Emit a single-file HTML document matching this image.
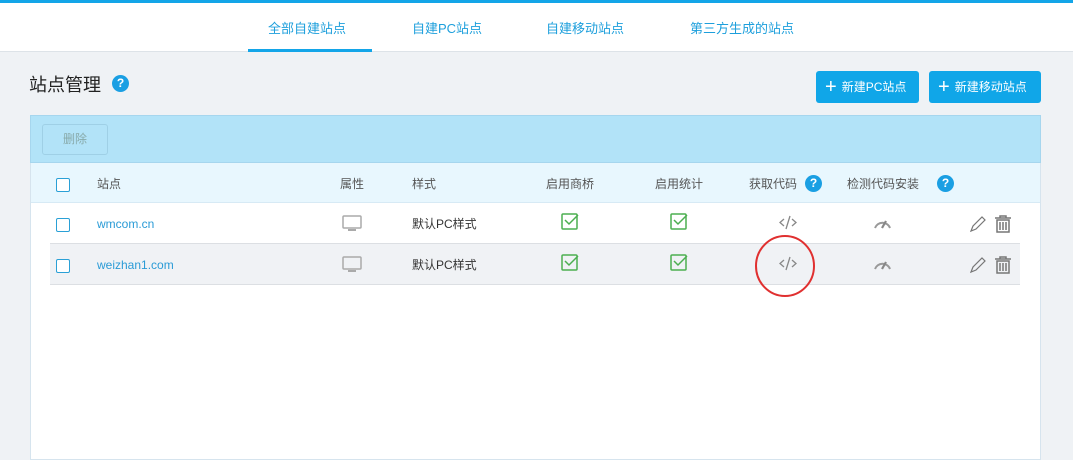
<!DOCTYPE html>
<html><head><meta charset="utf-8"><style>
*{margin:0;padding:0;box-sizing:border-box}
body{width:1073px;height:455px;overflow:hidden;background:#eff2f5;font-family:"Liberation Sans","Noto Sans CJK SC",sans-serif;position:relative;font-size:12px;color:#333}
.abs{position:absolute}
.top{left:0;top:0;width:1073px;height:3px;background:#13a5e8}
.nav{left:0;top:3px;width:1073px;height:49px;background:#fff;border-bottom:1px solid #dde3e8}
.tab{top:18px;font-size:13px;color:#1d9fdc}
.ul{left:248px;top:49px;width:124px;height:3px;background:#13a5e8}
.q{width:17px;height:17px;border-radius:50%;background:#1a9fe3;color:#fff;font-size:12px;font-weight:bold;text-align:center;line-height:17px}
.btn{top:71px;height:32px;background:#10a6e8;color:#fff;border-radius:3px;font-size:12px;line-height:32px}
.btn b{font-size:20px;font-weight:normal;vertical-align:-2px;margin:0 5px 0 9px}
.panel{left:30px;top:115px;width:1011px;height:345px;background:#fff;border:1px solid #d6e4ee}
.tool{left:30px;top:115px;width:1011px;height:48px;background:#b2e3f8;border:1px solid #a6d6ee}
.del{left:42px;top:124px;width:66px;height:31px;border:1px solid #9fd0e6;border-radius:3px;color:#8aa;text-align:center;line-height:29px;font-size:12px}
.hdr{left:31px;top:163px;width:1009px;height:40px;background:#e8f7fe;border-bottom:1px solid #d7eaf5}
.h{top:175px;font-size:12px;color:#555}
.row{left:50px;width:970px;height:41px;border-bottom:1px solid #dcdfe3}
.cb{width:14px;height:14px;border:1.5px solid #2aa0d6;border-radius:2px;background:#fff}
.t{font-size:12px}
.link{color:#2a9bd6;font-size:12px}
</style></head><body>
<div class="abs top"></div>
<div class="abs nav"></div>
<div class="abs tab" style="left:268px">全部自建站点</div>
<div class="abs tab" style="left:412px">自建PC站点</div>
<div class="abs tab" style="left:546px">自建移动站点</div>
<div class="abs tab" style="left:690px">第三方生成的站点</div>
<div class="abs ul"></div>
<div class="abs" style="left:29px;top:71px;font-size:18px;color:#222">站点管理</div>
<div class="abs q" style="left:112px;top:75px">?</div>
<div class="abs btn" style="left:816px;width:103px"><b>+</b>新建PC站点</div>
<div class="abs btn" style="left:929px;width:112px"><b>+</b>新建移动站点</div>
<div class="abs panel"></div>
<div class="abs tool"></div>
<div class="abs del">删除</div>
<div class="abs hdr"></div>
<div class="abs cb" style="left:56px;top:178px"></div>
<div class="abs h" style="left:97px">站点</div>
<div class="abs h" style="left:340px">属性</div>
<div class="abs h" style="left:412px">样式</div>
<div class="abs h" style="left:546px">启用商桥</div>
<div class="abs h" style="left:655px">启用统计</div>
<div class="abs h" style="left:749px">获取代码</div>
<div class="abs q" style="left:805px;top:175px">?</div>
<div class="abs h" style="left:847px">检测代码安装</div>
<div class="abs q" style="left:937px;top:175px">?</div>

<div class="abs row" style="top:203px;background:#fff"></div>
<div class="abs row" style="top:244px;height:41px;background:#f0f2f5"></div>

<div class="abs cb" style="left:56px;top:218px"></div>
<div class="abs cb" style="left:56px;top:259px"></div>
<div class="abs link" style="left:97px;top:217px">wmcom.cn</div>
<div class="abs link" style="left:97px;top:258px">weizhan1.com</div>
<div class="abs t" style="left:412px;top:215px">默认PC样式</div>
<div class="abs t" style="left:412px;top:256px">默认PC样式</div>

<svg class="abs" style="left:0;top:0" width="1073" height="455">
<g id="r1">
<rect x="343" y="216" width="18" height="12" rx="1" fill="none" stroke="#aaa" stroke-width="1.5"/>
<rect x="348" y="229" width="8" height="2" fill="#aaa"/>
<rect x="562" y="214" width="15" height="15" rx="1" fill="none" stroke="#4caf50" stroke-width="1.5"/>
<path d="M565 220 l4 4 l9 -9" fill="none" stroke="#4caf50" stroke-width="1.5"/>
<rect x="671" y="214" width="15" height="15" rx="1" fill="none" stroke="#4caf50" stroke-width="1.5"/>
<path d="M674 220 l4 4 l9 -9" fill="none" stroke="#4caf50" stroke-width="1.5"/>
<path d="M784 219 l-4 3.5 l4 3.5 M792 219 l4 3.5 l-4 3.5 M790 216 l-4 13" fill="none" stroke="#888" stroke-width="1.3"/>
<path d="M875 228 a8 8 0 0 1 15 0" fill="none" stroke="#999" stroke-width="2"/>
<path d="M882 228 l4 -7" stroke="#888" stroke-width="2.2"/>
<path d="M971 231 l2 -5 l9 -9 l3 3 l-9 9 z" fill="none" stroke="#777" stroke-width="1.2"/>
<path d="M995 218 h16 M1000 218 v-2 h6 v2 M997 220 h12 v12 h-12 z M1000 222 v8 M1003 222 v8 M1006 222 v8" fill="none" stroke="#777" stroke-width="1.5"/>
</g>
<use href="#r1" y="41"/>
<ellipse cx="785" cy="266" rx="29" ry="30" fill="none" stroke="#e03030" stroke-width="2"/>
</svg>
</body></html>
